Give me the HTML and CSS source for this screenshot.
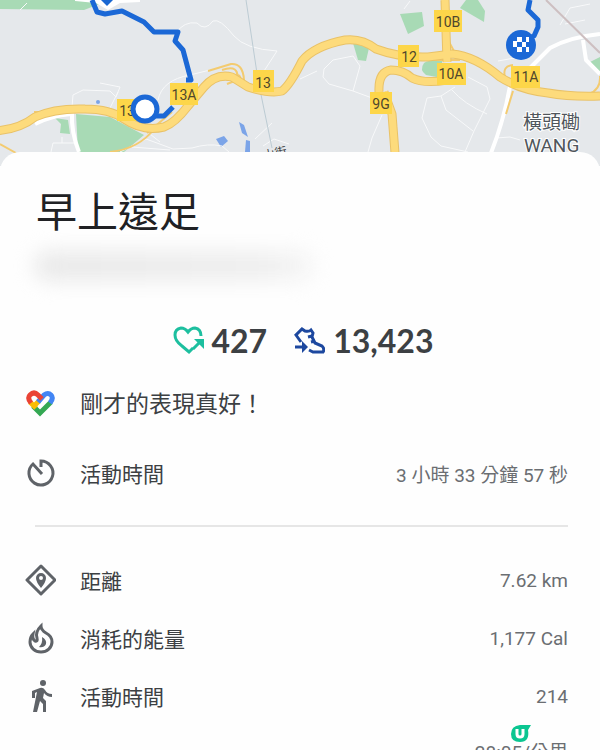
FILE: index.html
```html
<!DOCTYPE html>
<html lang="zh-Hant">
<head>
    <meta charset="UTF-8">
    <meta name="viewport" content="width=device-width, initial-scale=1.0">
    <title>早上遠足</title>
    <link rel="stylesheet" href="styles.css">
</head>
<body>
    <svg class="map" viewBox="0 0 600 166" preserveAspectRatio="xMidYMin slice" role="img" aria-label="路線地圖">
        <rect width="600" height="166" fill="#e5e8eb"/>

        <!-- parks -->
        <g fill="#a8dab5">
            <path d="M0 0H110L84 10L0 9Z"/>
            <path d="M76 114L110 117L144 135L124 152H78Z"/>
            <path d="M55 118L68 120L70 134L60 133L61 124Z"/>
            <path d="M400 14L422 12L424 26L408 34Z"/>
            <path d="M466 0H478L485 11L484 22L460 8Z"/>
            <path d="M353 43L369 48L366 61L358 60Z"/>
            <path d="M424 63Q430 59 442 61V78L426 75Q419 70 424 63Z"/>
            <path d="M590 62L600 57V72Z"/>
        </g>
        <path fill="#fff" d="M75 0H140V2L120 3L108 10L96 3L75 1Z"/>
        <g fill="#7ba4e8">
            <path d="M239 122L244 125L248 137L242 133Z"/>
            <path d="M246 140L250 141V152H245Z"/>
            <path d="M216 139L224 136L228 141L221 147Z"/>
            <circle cx="98" cy="102" r="2"/>
        </g>

        <!-- small streets -->
        <g class="street">
            <path d="M20 10L27 3M72 107L73 95L83 90L110 91L116 97L120 87L100 83M110 108L118 92"/>
            <path d="M176 33Q184 21 197 23Q205 32 213 21Q220 18 234 36Q245 49 277 51L264 71"/>
            <path d="M158 100Q162 80 190 75L210 70M120 152L146 139L157 143L173 149L192 148Q208 143 222 146L229 152M51 152L53 143H74M62 143V137M255 139L272 123M263 146L274 139L289 144M150 134L160 142M132 147L170 150"/>
            <path d="M324 69L333 60L353 56L360 66L353 91L329 84L323 77ZM353 91L372 98M382 115L372 138L368 152"/>
            <path d="M427 98L422 118L431 137L441 146L468 152M427 98L441 96L455 87M441 96L446 110L473 131M452 90Q464 104 487 114M468 77L487 87L490 99L474 131L465 152M496 138L510 137L520 140M300 79L317 71M498 61L520 57M560 25L570 8L590 4M565 24L585 20M404 9L410 1M394 117L397 127"/>
        </g>
        <g class="road-white">
            <path d="M35 124Q50 116 71 114M72 113Q71 132 79 152"/>
            <path d="M491 153Q504 120 510 86M530 68L550 48Q570 37 600 34M583 40L586 60L600 74"/>
        </g>
        <path class="boundary" d="M246 0L258 80L272 148"/>
        <path class="boundary-red" d="M546 0L600 53"/>

        <!-- highways -->
        <g class="ramp">
            <path d="M208 71L231 64Q243 63 244 80M222 70Q240 64 237 80L227 84M230 79Q241 70 241 82M34 112L60 112M110 152Q139 149 155 128M147 133L172 112M448 40L455 53M440 53H462M432 60H460M505 77Q502 66 513 65M513 91L506 114M600 76Q601 89 589 94M0 144L16 153"/>
        </g>
        <g class="road-edge">
            <path d="M-4 131Q20 129 35 117Q55 108 85 109Q110 109 124 119Q143 132 164 127Q175 123 188 106L204 87Q216 73 232 77L248 87Q270 94 282 91Q290 85 302 61Q314 46 345 40Q362 38 376 49Q400 58 428 57L452 54Q475 56 500 77Q520 90 548 93Q570 97 600 96"/>
            <path d="M379 92Q378 72 391 70Q403 70 412 78Q424 84 447 80M384 92L392 114L395 153M445 0L447 62"/>
        </g>
        <g class="road">
            <path d="M-4 131Q20 129 35 117Q55 108 85 109Q110 109 124 119Q143 132 164 127Q175 123 188 106L204 87Q216 73 232 77L248 87Q270 94 282 91Q290 85 302 61Q314 46 345 40Q362 38 376 49Q400 58 428 57L452 54Q475 56 500 77Q520 90 548 93Q570 97 600 96"/>
            <path d="M379 92Q378 72 391 70Q403 70 412 78Q424 84 447 80M384 92L392 114L395 153M445 0L447 62"/>
        </g>

        <!-- junction labels -->
        <g class="exit">
            <rect x="117" y="99" width="28" height="22"/>
            <rect x="170" y="83" width="28" height="22"/>
            <rect x="253" y="70" width="21" height="22"/>
            <rect x="398" y="45" width="21" height="22"/>
            <rect x="434" y="10" width="28" height="22"/>
            <rect x="437" y="63" width="29" height="22"/>
            <rect x="370" y="92" width="22" height="22"/>
            <rect x="511" y="66" width="29" height="22"/>
        </g>
        <g class="exit-label">
            <text x="127" y="116">13</text>
            <text x="184" y="100">13A</text>
            <text x="263" y="88">13</text>
            <text x="409" y="62">12</text>
            <text x="448" y="27">10B</text>
            <text x="451" y="79">10A</text>
            <text x="381" y="109">9G</text>
            <text x="526" y="82">11A</text>
        </g>

        <!-- hiked route -->
        <g class="route">
            <path d="M92 0L97 12L105 14L122 11L144 22L154 32L178 32L175 41L183 50L191 80H186"/>
            <path d="M173 107L164 116H155"/>
            <path d="M530 0L528 10L538 20V27L534 36L528 38"/>
        </g>
        <path fill="#1967d2" d="M99 -2H115L107 6Z"/>
        <circle cx="145" cy="109" r="12" fill="#fff" stroke="#1b68d6" stroke-width="5"/>
        <circle cx="521" cy="45" r="15" fill="#1b68d6"/>
        <path fill="#fff" d="M517 37h5v5h-5zM513 41h4v6h-4zM522 42h4v5h-4zM517 47h5v5h-5zM526 37h3v5h-3zM526 47h3v5h-3z"/>

        <g class="place">
            <text x="523" y="129">橫頭磡</text>
            <text x="524" y="152">WANG</text>
        </g>
        <text class="street-name" x="264" y="160" transform="rotate(-12 264 160)">山街</text>
    </svg>

    <main class="sheet">
        <h1>早上遠足</h1>
        <div class="smudge"></div>

        <div class="scores">
            <div class="score">
                <svg class="score-icon heart" viewBox="0 0 32 32" aria-hidden="true">
                    <path d="M29 11Q29 4 23 3Q19 3 16 7Q13 3 9 3Q3 4 3 10Q3 16 10 21L17 27L21 23"/>
                    <path d="M21 24L28 17"/>
                    <path class="tip" d="M22 14H32V24Z"/>
                </svg>
                <span>427</span>
            </div>
            <div class="score">
                <svg class="score-icon shoe" viewBox="0 0 32 32" aria-hidden="true">
                    <path d="M8 17L3 10L9 4L12 6Q16 7 18 5L20 8L19 12L22 18L29 21Q32 24 30 27H20L16 25"/>
                    <path d="M15 12L19 11M18 17L22 16M2 22H10"/>
                    <path class="tip" d="M9 16L15 22L9 28Z"/>
                </svg>
                <span>13,423</span>
            </div>
        </div>

        <div class="row praise">
            <svg class="icon" viewBox="0 0 32 32" aria-hidden="true">
                <g fill="none" stroke-width="5">
                    <path stroke="#34a853" d="M9 20L16 27L27 16"/>
                    <path stroke="#fbbc04" d="M6 16L12 22"/>
                    <path stroke="#fbbc04" d="M10 20L15 15"/>
                    <path stroke="#4285f4" d="M14 16L20 9Q24 6 27 9Q30 12 26 17"/>
                    <path stroke="#ea4335" d="M7 17Q3 12 6 9Q10 5 14 9L18 13"/>
                </g>
            </svg>
            <span>剛才的表現真好！</span>
        </div>

        <dl class="stats">
            <div class="row duration">
                <svg class="icon line" viewBox="0 0 32 32" aria-hidden="true">
                    <path d="M17 10V4A12 12 0 1 1 9 7L18 17"/>
                </svg>
                <dt>活動時間</dt>
                <dd>3 小時 33 分鐘 57 秒</dd>
            </div>
            <div class="row">
                <svg class="icon line" viewBox="0 0 32 32" aria-hidden="true">
                    <path stroke-linejoin="round" d="M17 2L31 16L17 30L3 16Z"/>
                    <path class="solid" fill-rule="evenodd" d="M17 9A5 5 0 0 1 22 14Q22 18 17 24Q12 18 12 14A5 5 0 0 1 17 9ZM17 12A2 2 0 0 0 17 16A2 2 0 0 0 17 12Z"/>
                </svg>
                <dt>距離</dt>
                <dd>7.62 km</dd>
            </div>
            <div class="row">
                <svg class="icon line" viewBox="0 0 32 32" aria-hidden="true">
                    <path d="M17 4Q11 10 13 16Q14 20 11 19Q8 17 9 12Q6 15 6 20A11 10 0 0 0 28 20Q28 14 22 11Q17 8 17 4Z"/>
                    <path class="solid" d="M18 15Q23 18 22 22Q20 26 15 25Q19 21 18 15Z"/>
                </svg>
                <dt>消耗的能量</dt>
                <dd>1,177 Cal</dd>
            </div>
            <div class="row">
                <svg class="icon" viewBox="0 0 32 32" aria-hidden="true">
                    <circle class="solid" cx="19" cy="3" r="3"/>
                    <path class="solid" d="M13 12L9 32H13L16 21L19 24V32H22V21L19 18L20 13Q23 17 28 17V14Q23 14 21 10Q19 7 16 8L8 11V18H11V13Z"/>
                </svg>
                <dt>活動時間</dt>
                <dd>214</dd>
            </div>
            <div class="row last">
                <span class="icon"></span>
                <dt></dt>
                <dd class="pace">28:05/公里
                    <svg class="badge" viewBox="0 0 20 17" aria-hidden="true">
                        <path fill="#0bc691" d="M9 0H20L17 5Q19 17 9 17Q0 17 0 9Q0 1 9 0Z"/>
                        <path fill="none" stroke="#fff" stroke-width="3" d="M6 4V9Q6 12 9 12Q12 12 12 9V4"/>
                    </svg>
                </dd>
            </div>
        </dl>
    </main>
</body>
</html>
```

FILE: styles.css
```css
* {
    margin: 0;
    padding: 0;
    box-sizing: border-box;
}

html {
    height: 100%;
    overflow: hidden;
}

body {
    height: 100%;
    overflow: hidden;
    background: #fefefe;
    color: #3c4043;
    font-family: Roboto, "Noto Sans CJK TC", sans-serif;
}

.map {
    display: block;
    width: 100%;
    height: 166px;
}

.street, .road-white, .road, .road-edge, .ramp, .route {
    fill: none;
    stroke-linejoin: round;
}

.street {
    stroke: #f8f9fa;
    stroke-width: 1;
}

.road-white {
    stroke: #fff;
    stroke-width: 4;
}

.boundary {
    fill: none;
    stroke: #bccbd3;
}

.boundary-red {
    fill: none;
    stroke: #cdbfc1;
    stroke-width: 2;
}

.road-edge {
    stroke: #e9c268;
    stroke-width: 9;
}

.road {
    stroke: #fddb7c;
    stroke-width: 7;
}

.ramp {
    stroke: #f3cb70;
    stroke-width: 2;
}

.exit {
    fill: #fdd649;
}

.exit-label {
    fill: #4f472d;
    font-size: 14px;
    text-anchor: middle;
}

.route {
    stroke: #1b68d6;
    stroke-width: 5;
}

.place {
    fill: #50565c;
    stroke: #fff;
    stroke-width: 2;
    paint-order: stroke;
    font-size: 19px;
}

.street-name {
    fill: #3c4043;
    font-size: 12px;
}

.sheet {
    position: relative;
    margin-top: -14px;
    padding: 33px 32px 0 24px;
    background: #fefefe;
    border-radius: 20px 20px 0 0;
}

h1 {
    padding-left: 12px;
    color: #202124;
    font-size: 41px;
    font-weight: 400;
    line-height: 56px;
}

.smudge {
    width: 280px;
    height: 30px;
    margin: 10px 0 0 10px;
    background: linear-gradient(90deg, #e9e9e9, #eee 80%, #f6f6f6);
    border-radius: 15px;
    filter: blur(10px);
}

.scores {
    display: flex;
    justify-content: center;
    gap: 26px;
    margin-top: 39px;
    padding-left: 13px;
}

.score {
    display: flex;
    align-items: center;
    gap: 8px;
    font-family: Lato, sans-serif;
    font-size: 32px;
    font-weight: 700;
    line-height: 42px;
}

.score-icon {
    width: 32px;
    height: 32px;
    fill: none;
    stroke-width: 3;
}

.heart {
    stroke: #1dbf9f;
}

.heart .tip {
    fill: #1dbf9f;
    stroke: none;
}

.shoe {
    stroke: #1d489f;
}

.shoe .tip {
    fill: #1d489f;
    stroke: none;
}

.row {
    display: flex;
    align-items: center;
    height: 58px;
}

.icon {
    flex: none;
    width: 32px;
    height: 32px;
    margin-right: 24px;
}

.line {
    fill: none;
    stroke: #5f6368;
    stroke-width: 3;
}

.solid {
    fill: #5f6368;
    stroke: none;
}

.praise {
    margin-top: 11px;
    font-size: 23px;
}

.duration {
    height: 84px;
    margin-bottom: 36px;
}

.last {
    height: 50px;
}

dt {
    flex: 1;
    font-size: 21px;
}

dd {
    color: #6b6e72;
    font-size: 19px;
}

.stats {
    background: linear-gradient(#e6e6e6, #e6e6e6) 11px 94px / calc(100% - 11px) 2px no-repeat;
}

.pace {
    position: relative;
}

.badge {
    position: absolute;
    top: -12px;
    left: 36px;
    width: 20px;
    height: 17px;
}
```
